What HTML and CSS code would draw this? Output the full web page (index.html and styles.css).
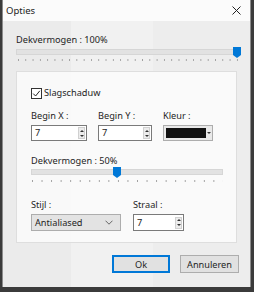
FILE: index.html
```html
<!DOCTYPE html>
<html>
    <head>
        <link rel="stylesheet" href="styles.css">
    </head>
    <body>
        <div class="window">
            <div class="titlebar">
                <span class="title">Opties</span>
                <svg class="close" width="9" height="9" viewBox="0 0 9 9"><path d="M0.5 0.5 L8.5 8.5 M8.5 0.5 L0.5 8.5" stroke="#222" stroke-width="1"/></svg>
            </div>
            <div class="content">
                <p class="label top-label">Dekvermogen : 100%</p>
                <div class="slider wide">
                    <div class="track"></div>
                    <svg class="thumb" style="left:217px" width="8" height="11" viewBox="0 0 8 11"><path d="M0 0 H8 V8 L4 11 L0 8 Z" fill="#0078d7"/></svg>
                </div>
                <div class="ticks wide-ticks"></div>

                <div class="panel">
                    <div class="check-row">
                        <span class="checkbox">
                            <svg width="9" height="9" viewBox="0 0 9 9"><path d="M1.2 4.6 L3.6 7 L7.8 1.8" fill="none" stroke="#222" stroke-width="1"/></svg>
                        </span>
                        <span class="label">Slagschaduw</span>
                    </div>

                    <div class="field-row">
                        <div class="field">
                            <p class="label">Begin X :</p>
                            <div class="spin w56">
                                <span class="value">7</span>
                                <span class="spin-btns"><i class="up"></i><i class="down"></i></span>
                            </div>
                        </div>
                        <div class="field">
                            <p class="label">Begin Y :</p>
                            <div class="spin w54">
                                <span class="value">7</span>
                                <span class="spin-btns"><i class="up"></i><i class="down"></i></span>
                            </div>
                        </div>
                        <div class="field">
                            <p class="label">Kleur :</p>
                            <div class="color">
                                <span class="swatch"></span>
                                <span class="color-arrow"><i class="down"></i></span>
                            </div>
                        </div>
                    </div>

                    <p class="label mid-label">Dekvermogen : 50%</p>
                    <div class="slider narrow">
                        <div class="track"></div>
                        <svg class="thumb" style="left:82px" width="8" height="11" viewBox="0 0 8 11"><path d="M0 0 H8 V8 L4 11 L0 8 Z" fill="#0078d7"/></svg>
                    </div>
                    <div class="ticks narrow-ticks"></div>

                    <div class="field-row bottom-row">
                        <div class="field">
                            <p class="label">Stijl :</p>
                            <div class="select">
                                <span>Antialiased</span>
                                <svg width="8" height="5" viewBox="0 0 8 5"><path d="M0.5 0.7 L4 4.2 L7.5 0.7" fill="none" stroke="#666" stroke-width="1"/></svg>
                            </div>
                        </div>
                        <div class="field">
                            <p class="label">Straal :</p>
                            <div class="spin w51">
                                <span class="value">7</span>
                                <span class="spin-btns"><i class="up"></i><i class="down"></i></span>
                            </div>
                        </div>
                    </div>
                </div>

                <div class="buttons">
                    <div class="button default">Ok</div>
                    <div class="button">Annuleren</div>
                </div>
            </div>
        </div>
    </body>
</html>
```

FILE: styles.css
```css
html,body {
    margin: 0;
    width: 100%;
    height: 100%;
    font-family: "Noto Sans", "Open Sans", sans-serif;
    font-size: 9.2px;
    color: #1e1e1e;
    background-color: #3b3b3b;
}

body {
    padding-left: 2px;
    box-sizing: border-box;
}

.window {
    width: 249px;
    height: 287px;
    box-sizing: border-box;
    border-left: 1px solid #8c8c8c;
    border-right: 1px solid #8c8c8c;
    background: linear-gradient(to right, #ebebeb 0, #ebebeb 68px, #f1f1f1 68px, #f1f1f1 150px, #ededed 150px);
}

.titlebar {
    height: 21px;
    display: flex;
    align-items: center;
    justify-content: space-between;
    padding: 0 9px 0 3px;
    background-color: #fbfbfb;
}

.title {
    font-size: 9.5px;
    color: #222;
}

.content {
    padding: 0 10px 0 13px;
}

p {
    margin: 0;
}

.label {
    line-height: 12px;
    white-space: nowrap;
}

.top-label {
    padding-top: 13px;
}

.slider {
    position: relative;
    height: 11px;
}

.slider .track {
    position: relative;
    top: 2px;
    height: 4px;
    background-color: #e2e2e2;
    border: 1px solid #d6d6d6;
}

.slider .thumb {
    position: absolute;
    top: 0;
}

.wide {
    width: 221px;
    margin-top: 1px;
}

.ticks {
    height: 2px;
    margin-top: 1px;
    background-image: linear-gradient(to right, #a0a0a0 1px, transparent 1px);
}

.wide-ticks {
    width: 225px;
    background-size: 7.3px 2px;
    background-position: 2px 0;
}

.panel {
    margin-top: 10px;
    width: 221px;
    height: 172px;
    box-sizing: border-box;
    border: 1px solid #dedede;
    background-color: rgba(252,252,252,0.85);
    padding: 15px 0 0 14px;
}

.check-row {
    display: flex;
    align-items: center;
    gap: 2px;
}

.checkbox {
    width: 11px;
    height: 11px;
    border: 1px solid #333;
    box-sizing: border-box;
    display: flex;
    align-items: center;
    justify-content: center;
    background: #fff;
}

.checkbox svg {
    flex: none;
}

.field-row {
    display: flex;
    gap: 11px;
    margin-top: 11px;
}

.field .label {
    margin-bottom: 3px;
}

.spin {
    height: 16px;
    box-sizing: border-box;
    border: 1px solid #7a7a7a;
    background-color: #fff;
    display: flex;
    align-items: center;
    justify-content: space-between;
    padding: 0 1px 0 3px;
}

.w56 { width: 56px; }
.w54 { width: 54px; }
.w51 { width: 51px; }

.value {
    line-height: 12px;
}

.spin-btns {
    width: 7px;
    height: 12px;
    box-sizing: border-box;
    border: 1px solid #d0d0d0;
    display: flex;
    flex-direction: column;
    justify-content: space-between;
    align-items: center;
}

.spin-btns i {
    width: 5px;
    height: 5px;
    background: #ececec;
    display: flex;
    align-items: center;
    justify-content: center;
}

i.up::after,
i.down::after {
    content: "";
    border-left: 2px solid transparent;
    border-right: 2px solid transparent;
}

i.up::after {
    border-bottom: 2px solid #333;
}

i.down::after {
    border-top: 2px solid #333;
}

.color {
    width: 50px;
    height: 16px;
    box-sizing: border-box;
    border: 1px solid #adadad;
    background: #e9e9e9;
    display: flex;
    padding: 2px 0 2px 2px;
}

.swatch {
    width: 40px;
    background: #111;
}

.color-arrow {
    flex: 1;
    display: flex;
    align-items: center;
    justify-content: center;
}

.color-arrow i {
    display: flex;
}

.mid-label {
    margin-top: 14px;
}

.narrow {
    width: 192px;
    margin-top: 0;
}

.narrow-ticks {
    width: 192px;
    margin-top: 2px;
    background-size: 9.55px 2px;
    background-position: 1px 0;
}

.bottom-row {
    gap: 12px;
    margin-top: 17px;
}

.select {
    width: 90px;
    height: 17px;
    box-sizing: border-box;
    border: 1px solid #adadad;
    background-color: #e3e3e3;
    display: flex;
    align-items: center;
    justify-content: space-between;
    padding: 0 7px 0 3px;
}

.bottom-row .spin {
    height: 17px;
}

.buttons {
    display: flex;
    justify-content: flex-end;
    gap: 10px;
    margin-top: 12px;
    width: 223px;
}

.button {
    width: 59px;
    height: 18px;
    box-sizing: border-box;
    border: 1px solid #adadad;
    background-color: #e1e1e1;
    display: flex;
    align-items: center;
    justify-content: center;
}

.button.default {
    width: 58px;
    border: 2px solid #0078d7;
}
```
